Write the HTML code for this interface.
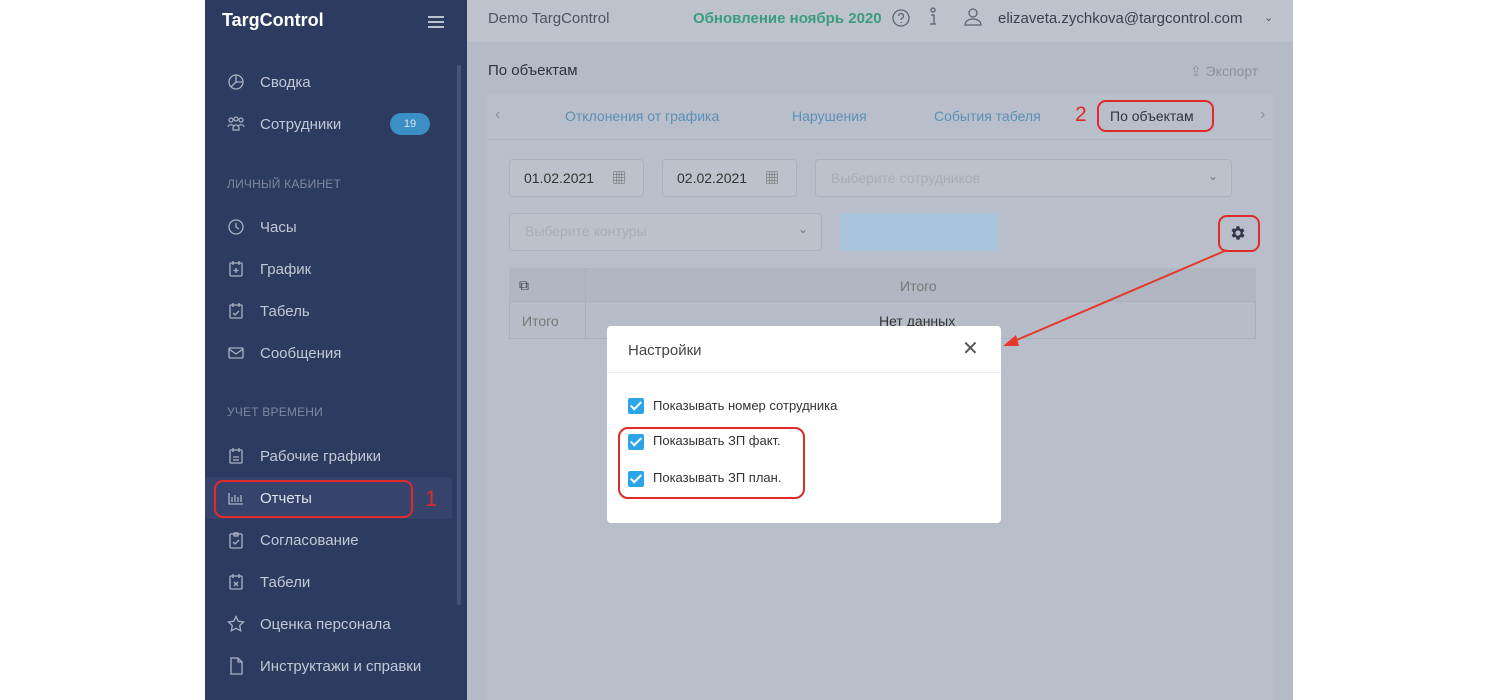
<!DOCTYPE html>
<html><head><meta charset="utf-8"><style>
*{margin:0;padding:0;box-sizing:border-box}
body{width:1500px;height:700px;background:#fff;position:relative;overflow:hidden;font-family:"Liberation Sans","Noto Sans CJK SC",sans-serif}
.a{position:absolute}
#sb{left:205px;top:0;width:262px;height:700px;background:#2e3b60}
#main{left:467px;top:0;width:826px;height:700px;background:#b4bac6}
.nav{position:absolute;left:55px;color:#c3c8d6;font-size:15px}
.ic{position:absolute;left:22px;width:18px;height:18px}
.sec{position:absolute;left:22px;color:#7f879f;font-size:12px;letter-spacing:.2px}
.t{color:#5a8fb6;font-size:14px;position:absolute;top:108px}
.inp{position:absolute;background:#bcc2cc;border:1px solid #aab0bc;border-radius:4px}
.cb{position:absolute;left:628px;width:16px;height:16px;background:#2aa6e8;border-radius:2px}
.cb:after{content:"";position:absolute;left:5px;top:1px;width:4px;height:9px;border:solid #fff;border-width:0 2px 2px 0;transform:rotate(45deg)}
.lb{position:absolute;left:653px;font-size:13px;color:#333}
</style></head><body>
<div id="sb" class="a">
 <div class="a" style="left:17px;top:10px;color:#fff;font-weight:bold;font-size:18px">TargControl</div>
 <div class="a" style="left:223px;top:16px;width:16px;height:2px;background:#bcc2d0;box-shadow:0 5px 0 #bcc2d0,0 10px 0 #bcc2d0"></div>
 <div class="a" style="left:252px;top:65px;width:4px;height:540px;background:#46527a;border-radius:2px"></div>
 <svg class="ic" style="top:73px" viewBox="0 0 18 18" fill="none" stroke="#aab1c4" stroke-width="1.3"><circle cx="9" cy="9" r="7"/><path d="M9 2v7h7M9 9l-5 5"/></svg>
 <div class="nav" style="top:74px">Сводка</div>
 <svg class="ic" style="top:115px" viewBox="0 0 18 18" fill="none" stroke="#aab1c4" stroke-width="1.2"><circle cx="4" cy="5" r="2"/><circle cx="9" cy="4" r="2"/><circle cx="14" cy="5" r="2"/><path d="M1 12c0-3 6-3 6 0M6 13c0-4 6-4 6 0v2H6zM11 12c0-3 6-3 6 0"/></svg>
 <div class="nav" style="top:116px">Сотрудники</div>
 <div class="a" style="left:185px;top:113px;width:40px;height:22px;border-radius:11px;background:#3b8fc4;color:#d8e6f0;font-size:11px;text-align:center;line-height:22px">19</div>
 <div class="sec" style="top:177px">ЛИЧНЫЙ КАБИНЕТ</div>
 <svg class="ic" style="top:218px" viewBox="0 0 18 18" fill="none" stroke="#aab1c4" stroke-width="1.3"><circle cx="9" cy="9" r="7"/><path d="M9 5v4l3 2"/></svg>
 <div class="nav" style="top:219px">Часы</div>
 <svg class="ic" style="top:260px" viewBox="0 0 18 18" fill="none" stroke="#aab1c4" stroke-width="1.3"><rect x="3" y="3" width="12" height="13" rx="1"/><path d="M6 1v4M12 1v4M9 8v5M6.5 10.5h5"/></svg>
 <div class="nav" style="top:261px">График</div>
 <svg class="ic" style="top:302px" viewBox="0 0 18 18" fill="none" stroke="#aab1c4" stroke-width="1.3"><rect x="3" y="3" width="12" height="13" rx="1"/><path d="M6 1v4M12 1v4M6 11l2 2 4-4"/></svg>
 <div class="nav" style="top:303px">Табель</div>
 <svg class="ic" style="top:344px" viewBox="0 0 18 18" fill="none" stroke="#aab1c4" stroke-width="1.3"><rect x="2" y="4" width="14" height="10" rx="1"/><path d="M2 5l7 5 7-5"/></svg>
 <div class="nav" style="top:345px">Сообщения</div>
 <div class="sec" style="top:405px">УЧЕТ ВРЕМЕНИ</div>
 <svg class="ic" style="top:447px" viewBox="0 0 18 18" fill="none" stroke="#aab1c4" stroke-width="1.3"><rect x="3" y="3" width="12" height="13" rx="1"/><path d="M6 1v4M12 1v4M6 10h6M6 13h6"/></svg>
 <div class="nav" style="top:448px">Рабочие графики</div>
 <div class="a" style="left:0;top:477px;width:247px;height:42px;background:#36436a"></div>
 <svg class="ic" style="top:489px" viewBox="0 0 18 18" fill="none" stroke="#aab1c4" stroke-width="1.3"><path d="M2 4v11h14M5 13V8M8 13V6M11 13V8M14 13V6"/></svg>
 <div class="nav" style="top:490px;color:#dfe3ec">Отчеты</div>
 <div class="a" style="left:9px;top:480px;width:199px;height:38px;border:2px solid #e02a2a;border-radius:9px"></div>
 <div class="a" style="left:220px;top:486px;color:#e02a2a;font-size:22px">1</div>
 <svg class="ic" style="top:531px" viewBox="0 0 18 18" fill="none" stroke="#aab1c4" stroke-width="1.3"><rect x="3" y="3" width="12" height="14" rx="1"/><path d="M7 2h4v3H7zM6 11l2 2 4-4"/></svg>
 <div class="nav" style="top:532px">Согласование</div>
 <svg class="ic" style="top:573px" viewBox="0 0 18 18" fill="none" stroke="#aab1c4" stroke-width="1.3"><rect x="3" y="3" width="12" height="13" rx="1"/><path d="M6 1v4M12 1v4M7 9l4 4M11 9l-4 4"/></svg>
 <div class="nav" style="top:574px">Табели</div>
 <svg class="ic" style="top:615px" viewBox="0 0 18 18" fill="none" stroke="#aab1c4" stroke-width="1.3"><path d="M9 1.5l2.3 4.8 5.2.7-3.8 3.6 1 5.2L9 13.3l-4.7 2.5 1-5.2L1.5 7l5.2-.7z"/></svg>
 <div class="nav" style="top:616px">Оценка персонала</div>
 <svg class="ic" style="top:657px" viewBox="0 0 18 18" fill="none" stroke="#aab1c4" stroke-width="1.3"><path d="M4 1h7l4 4v12H4zM11 1v4h4"/></svg>
 <div class="nav" style="top:658px">Инструктажи и справки</div>
</div>
<div id="main" class="a">
 <div class="a" style="left:0;top:0;width:826px;height:42px;background:#bdc2cd"></div>
 <div class="a" style="left:21px;top:10px;font-size:15px;color:#4c5464">Demo TargControl</div>
 <div class="a" style="left:226px;top:10px;font-size:15px;color:#3a9d7c;font-weight:bold">Обновление ноябрь 2020</div>
 <svg class="a" style="left:424px;top:8px" width="20" height="20" viewBox="0 0 20 20" fill="none" stroke="#5a6272" stroke-width="1.3"><circle cx="10" cy="10" r="8"/><path d="M7.5 8a2.5 2.5 0 1 1 3.5 2.3c-.7.4-1 .8-1 1.7M10 14v1"/></svg>
 <svg class="a" style="left:459px;top:7px" width="14" height="20" viewBox="0 0 14 20" fill="none" stroke="#5a6272" stroke-width="1.3"><circle cx="7" cy="3" r="2"/><path d="M5 8h3v9M4 17h6"/></svg>
 <svg class="a" style="left:496px;top:7px" width="20" height="20" viewBox="0 0 20 20" fill="none" stroke="#5a6272" stroke-width="1.3"><circle cx="10" cy="6" r="4"/><path d="M2 18c0-4 4-6 8-6s8 2 8 6z"/></svg>
 <div class="a" style="left:531px;top:10px;font-size:15px;color:#3a4150">elizaveta.zychkova@targcontrol.com</div>
 <div class="a" style="left:797px;top:11px;font-size:11px;color:#555">&#8964;</div>
 <div class="a" style="left:21px;top:62px;font-size:15px;color:#2d3340">По объектам</div>
 <div class="a" style="left:723px;top:63px;font-size:14px;color:#8a909c">⇪ Экспорт</div>
 <div class="a" style="left:20px;top:94px;width:786px;height:606px;background:#b9bfca"></div>
 <div class="a" style="left:28px;top:106px;color:#8a909c;font-size:16px">‹</div>
 <div class="a" style="left:793px;top:106px;color:#8a909c;font-size:16px">›</div>
 <div class="t" style="left:98px">Отклонения от графика</div>
 <div class="t" style="left:325px">Нарушения</div>
 <div class="t" style="left:467px">События табеля</div>
 <div class="a" style="left:608px;top:103px;color:#e02a2a;font-size:21px">2</div>
 <div class="a" style="left:630px;top:100px;width:117px;height:32px;border:2px solid #e02a2a;border-radius:9px"></div>
 <div class="a" style="left:643px;top:108px;font-size:14px;color:#2d3340">По объектам</div>
 <div class="a" style="left:20px;top:139px;width:786px;height:1px;background:#adb3bf"></div>
 <div class="inp" style="left:42px;top:159px;width:135px;height:38px"></div>
 <div class="a" style="left:57px;top:170px;font-size:14px;color:#333">01.02.2021</div>
 <div class="a" style="left:145px;top:168px;font-size:14px;color:#666">▦</div>
 <div class="inp" style="left:195px;top:159px;width:135px;height:38px"></div>
 <div class="a" style="left:210px;top:170px;font-size:14px;color:#333">02.02.2021</div>
 <div class="a" style="left:298px;top:168px;font-size:14px;color:#666">▦</div>
 <div class="inp" style="left:348px;top:159px;width:417px;height:38px"></div>
 <div class="a" style="left:364px;top:170px;font-size:14px;color:#a8aeb8">Выберите сотрудников</div>
 <div class="a" style="left:741px;top:169px;font-size:12px;color:#777">&#8964;</div>
 <div class="inp" style="left:42px;top:213px;width:313px;height:38px"></div>
 <div class="a" style="left:58px;top:223px;font-size:14px;color:#a8aeb8">Выберите контуры</div>
 <div class="a" style="left:331px;top:222px;font-size:12px;color:#777">&#8964;</div>
 <div class="a" style="left:373px;top:213px;width:158px;height:38px;background:#a8c3dc;border-radius:4px"></div>
 <div class="a" style="left:751px;top:215px;width:42px;height:37px;border:2px solid #e02a2a;border-radius:9px"></div>
 <svg class="a" style="left:762px;top:224px" width="18" height="18" viewBox="0 0 24 24"><path fill="#2f3748" d="M19.4 13a7.5 7.5 0 0 0 0-2l2.1-1.6-2-3.5-2.5 1a7.6 7.6 0 0 0-1.7-1L15 3h-4l-.4 2.7a7.6 7.6 0 0 0-1.7 1l-2.5-1-2 3.5L6.6 11a7.5 7.5 0 0 0 0 2l-2.1 1.6 2 3.5 2.5-1a7.6 7.6 0 0 0 1.7 1L11 21h4l.4-2.7a7.6 7.6 0 0 0 1.7-1l2.5 1 2-3.5zM13 15.5a3.5 3.5 0 1 1 0-7 3.5 3.5 0 0 1 0 7z" transform="translate(-1 0)"/></svg>
 <div class="a" style="left:42px;top:268px;width:747px;height:71px;border:1px solid #a9afbb;background:#b7bdc8"></div>
 <div class="a" style="left:42px;top:268px;width:747px;height:34px;background:#b0b6c2;border-bottom:1px solid #a9afbb"></div>
 <div class="a" style="left:118px;top:268px;width:1px;height:71px;background:#a9afbb"></div>
 <div class="a" style="left:52px;top:277px;font-size:14px;color:#3a4150">⧉</div>
 <div class="a" style="left:433px;top:278px;font-size:14px;color:#777">Итого</div>
 <div class="a" style="left:55px;top:313px;font-size:14px;color:#777">Итого</div>
 <div class="a" style="left:412px;top:313px;font-size:14px;color:#333">Нет данных</div>
</div>
<svg class="a" style="left:0;top:0" width="1500" height="700"><line x1="1227" y1="250" x2="1012" y2="342" stroke="#e53a2a" stroke-width="2"/><polygon points="1003,346 1016,335 1019,346" fill="#e53a2a"/></svg>
<div class="a" style="left:607px;top:326px;width:394px;height:197px;background:#fff;border-radius:4px"></div>
<div class="a" style="left:628px;top:342px;font-size:15px;color:#444">Настройки</div>
<div class="a" style="left:962px;top:336px;font-size:20px;color:#555">✕</div>
<div class="a" style="left:607px;top:372px;width:394px;height:1px;background:#eee"></div>
<div class="cb" style="top:398px"></div><div class="lb" style="top:398px">Показывать номер сотрудника</div>
<div class="cb" style="top:434px"></div><div class="lb" style="top:433px">Показывать ЗП факт.</div>
<div class="cb" style="top:471px"></div><div class="lb" style="top:470px">Показывать ЗП план.</div>
<div class="a" style="left:618px;top:427px;width:187px;height:72px;border:2px solid #e02a2a;border-radius:10px"></div>
</body></html>
